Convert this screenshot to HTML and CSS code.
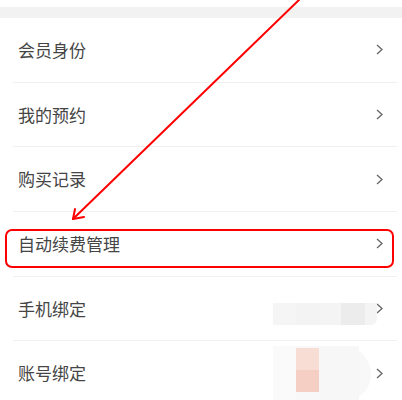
FILE: index.html
```html
<!DOCTYPE html>
<html lang="zh">
<head>
<meta charset="utf-8">
<link rel="stylesheet" href="styles.css">
</head>
<body>
<div class="page">
  <div class="top"></div>
  <div class="band"></div>
  <ul class="list">
    <li class="item"><span class="label">会员身份</span><svg class="chev" viewBox="0 0 7 11"><path d="M1 1 L6 5.5 L1 10"/></svg></li>
    <li class="item"><span class="label">我的预约</span><svg class="chev" viewBox="0 0 7 11"><path d="M1 1 L6 5.5 L1 10"/></svg></li>
    <li class="item"><span class="label">购买记录</span><svg class="chev" viewBox="0 0 7 11"><path d="M1 1 L6 5.5 L1 10"/></svg></li>
    <li class="item"><span class="label">自动续费管理</span><svg class="chev" viewBox="0 0 7 11"><path d="M1 1 L6 5.5 L1 10"/></svg></li>
    <li class="item"><span class="label">手机绑定</span><svg class="chev" viewBox="0 0 7 11"><path d="M1 1 L6 5.5 L1 10"/></svg></li>
    <li class="item"><span class="label">账号绑定</span><svg class="chev" viewBox="0 0 7 11"><path d="M1 1 L6 5.5 L1 10"/></svg></li>
  </ul>

  <div class="blur blur-phone">
    <span class="cell c1"></span><span class="cell c2"></span><span class="cell c3"></span><span class="cell c4"></span>
  </div>
  <div class="blur blur-account">
    <span class="cell p0"></span><span class="cell p1"></span><span class="cell p2"></span>
  </div>

  <svg class="annot" viewBox="0 0 402 400" width="402" height="400">
    <path class="red" d="M301 -2 L73 219"/>
    <path class="red" d="M75 209 L73 219 L84 217"/>
    <rect class="red" x="6" y="230" width="387" height="37" rx="6" ry="6"/>
  </svg>
</div>
</body>
</html>
```

FILE: styles.css
```css
* { box-sizing: border-box; }
html, body { margin: 0; padding: 0; background: #fff; }
body {
  font-family: "Noto Sans CJK SC", "Noto Sans", sans-serif;
  width: 402px;
  overflow: hidden;
}
.page {
  position: relative;
  width: 402px;
  height: 400px;
  overflow: hidden;
}
.top { height: 7px; background: #fff; }
.band { height: 11px; background: #f2f2f2; }
.list {
  list-style: none;
  margin: 0;
  padding: 0;
}
.item {
  display: flex;
  align-items: center;
  justify-content: space-between;
  height: 64.7px;
  margin: 0 5px 0 13px;
  padding: 0 14px 0 5px;
  border-bottom: 1px solid #f0f0f0;
}
.label {
  font-size: 17px;
  line-height: 20px;
  color: #454545;
}
.chev {
  width: 7px;
  height: 11px;
  fill: none;
  stroke: #666;
  stroke-width: 1.3;
}
.blur {
  position: absolute;
  display: flex;
}
.blur-phone {
  left: 273px;
  top: 303px;
  width: 104px;
  height: 22px;
  background: #f4f4f4;
  border-radius: 0 0 6px 0;
}
.blur-phone .cell { height: 100%; }
.c1 { width: 23px; background: #f5f5f5; }
.c2 { width: 23px; background: #f3f3f3; }
.c3 { width: 22px; background: #f4f4f4; }
.c4 { width: 24px; background: #ececec; }
.blur-account {
  left: 273px;
  top: 346px;
  width: 98px;
  height: 56px;
  background: #f8f8f8;
  border-radius: 0 28px 28px 0;
}
.blur-account .cell { height: 100%; }
.p0 { width: 23px; background: #fbfafa; }
.p1 { width: 23px; background: linear-gradient(#f8ddd5 0 50%, #f5cfc3 50% 100%); height: 44px !important; margin-top: 2px; }
.p2 { width: 40px; background: #f7f7f7; }
.annot {
  position: absolute;
  left: 0;
  top: 0;
  pointer-events: none;
}
.red {
  fill: none;
  stroke: #f00;
  stroke-width: 2;
  stroke-linecap: round;
  stroke-linejoin: round;
}
```
